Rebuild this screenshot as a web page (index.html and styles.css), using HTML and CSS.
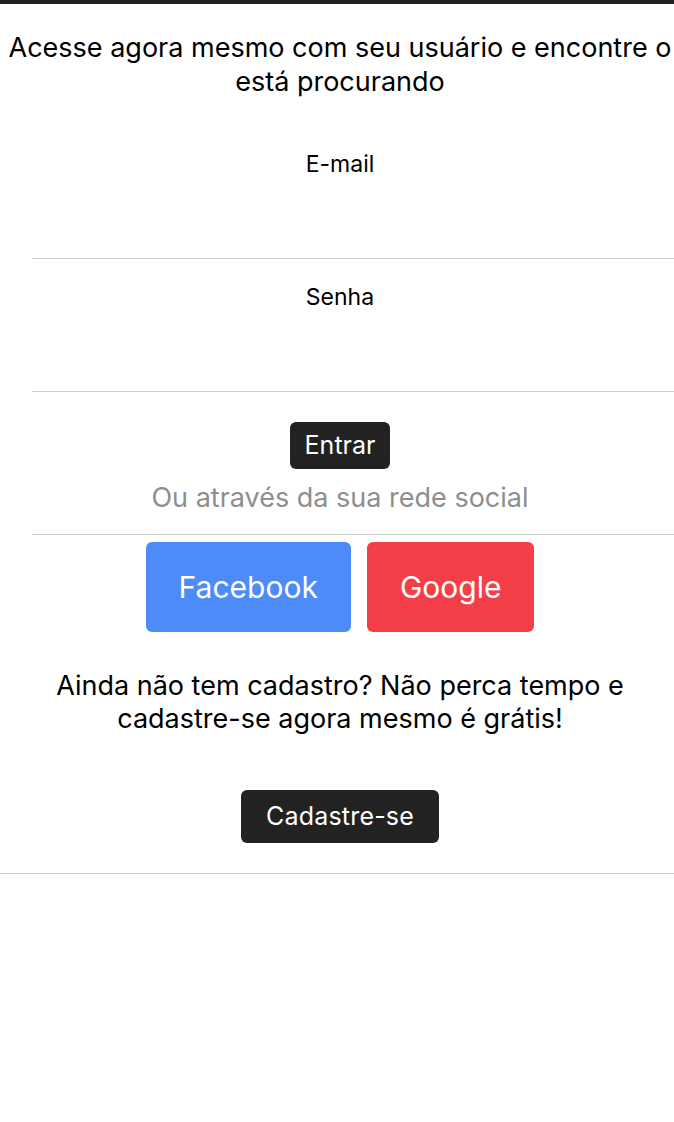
FILE: index.html
```html
<!DOCTYPE html>
<html lang="pt-BR">
<head>
    <meta charset="UTF-8">
    <meta name="viewport" content="width=device-width, initial-scale=1.0">
    <title>Login</title>
    <link rel="stylesheet" href="styles.css">
</head>
<body>
    <div class="page">
        <div class="top-bar"></div>

        <h1 class="login-title">Acesse agora mesmo com seu usuário e encontre o<br>está procurando</h1>

        <form class="login-form" onsubmit="return false">
            <div class="field">
                <label for="email">E-mail</label>
                <input type="email" id="email">
            </div>
            <div class="field">
                <label for="senha">Senha</label>
                <input type="password" id="senha">
            </div>

            <div class="actions">
                <button class="btn-dark btn-entrar">Entrar</button>
            </div>
            <p class="social-text">Ou através da sua rede social</p>
            <hr class="divider">

            <div class="social-buttons">
                <button class="btn-social facebook">Facebook</button>
                <button class="btn-social google">Google</button>
            </div>
        </form>

        <div class="signup">
            <p>Ainda não tem cadastro? Não perca tempo e<br>cadastre-se agora mesmo é grátis!</p>
            <button class="btn-dark btn-cadastro">Cadastre-se</button>
        </div>
    </div>
</body>
</html>
```

FILE: styles.css
```css
html,
body {
    overflow-x: hidden;
}

body {
    margin: 0;
    font-family: Inter, "Noto Sans", sans-serif;
    color: #000;
    background: #fff;
}

.page {
    width: 680px;
}

.top-bar {
    height: 4px;
    background: #222;
}

.login-title {
    margin: 27px 0 0;
    font-size: 27px;
    font-weight: 400;
    line-height: 34px;
    text-align: center;
    white-space: nowrap;
}

.login-form {
    margin-top: 27px;
}

.field {
    padding-top: 25px;
    text-align: center;
}

.field label {
    display: block;
    font-size: 23px;
    line-height: 26px;
}

.field input {
    display: block;
    box-sizing: border-box;
    width: calc(100% - 32px);
    height: 82px;
    margin-left: 32px;
    padding: 0;
    border: none;
    border-bottom: 1px solid #cfcfcf;
    outline: none;
    background: transparent;
}

.actions {
    text-align: center;
    margin-top: 30px;
}

button {
    font-family: inherit;
    border: none;
    cursor: pointer;
    color: #fff;
}

.btn-dark {
    background: #222;
    border-radius: 6px;
    font-size: 25px;
}

.btn-entrar {
    padding: 9px 15px;
    line-height: 29px;
}

.social-text {
    margin: 12px 0 0;
    color: #8e8e8e;
    font-size: 27px;
    line-height: 33px;
    text-align: center;
}

.divider {
    margin: 20px 0 0 32px;
    border: none;
    border-top: 1px solid #cfcfcf;
}

.social-buttons {
    display: flex;
    justify-content: center;
    gap: 16px;
    margin-top: 7px;
}

.btn-social {
    height: 90px;
    padding: 0 33px;
    border-radius: 6px;
    font-size: 30px;
}

.facebook {
    background: #4d8cf8;
}

.google {
    background: #f43f48;
}

.signup {
    text-align: center;
    border-bottom: 1px solid #cfcfcf;
    padding-bottom: 30px;
}

.signup p {
    margin: 37px 0 0;
    font-size: 27px;
    line-height: 33px;
}

.btn-cadastro {
    margin-top: 55px;
    padding: 12px 25px;
    line-height: 29px;
    letter-spacing: 0.2px;
}
```
